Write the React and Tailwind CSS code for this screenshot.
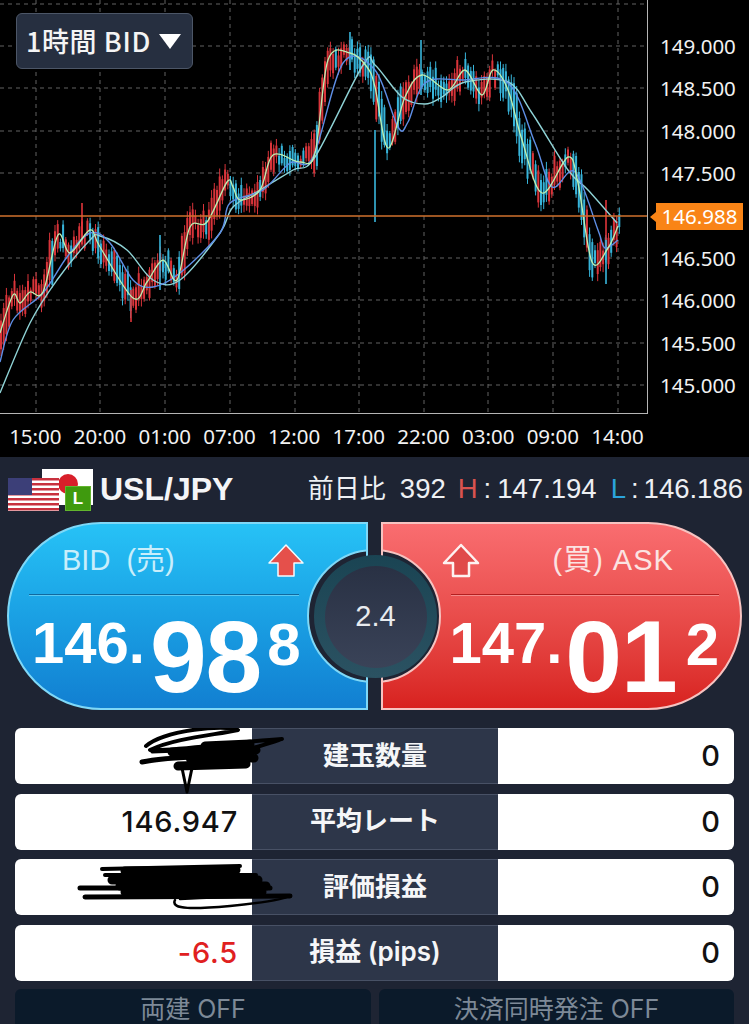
import React from 'react';

const fast = [[0,333],[13,295],[20,303],[30,292],[43,292],[58,235],[70,253],[90,230],[100,247],[133,298],[147,282],[163,260],[177,280],[190,227],[207,222],[227,182],[233,187],[240,200],[260,190],[273,155],[300,162],[315,153],[328,60],[350,53],[367,67],[375,87],[388,148],[405,97],[422,75],[448,90],[465,70],[482,95],[493,70],[508,90],[522,140],[542,193],[568,157],[578,183],[592,262],[608,248],[618,226]];
const mid = [[0,362],[13,320],[43,293],[67,257],[90,233],[110,243],[133,280],[153,287],[180,273],[220,233],[230,203],[263,190],[290,163],[313,157],[343,63],[375,70],[398,127],[408,122],[425,83],[462,80],[508,83],[535,143],[552,187],[575,172],[598,230],[605,248],[618,240]];
const slow = [[0,393],[30,323],[57,280],[90,240],[100,236],[127,250],[153,280],[180,280],[220,233],[233,207],[260,190],[293,170],[315,157],[363,65],[375,65],[402,97],[425,104],[442,97],[465,82],[508,82],[532,113],[568,170],[588,190],[617,223]];

// catmull-rom through the points so the averages read as curves
const toPath = (pts) => {
  let d = `M${pts[0][0]} ${pts[0][1]}`;
  for (let i = 0; i < pts.length - 1; i++) {
    const p0 = pts[i - 1] || pts[i];
    const p1 = pts[i];
    const p2 = pts[i + 1];
    const p3 = pts[i + 2] || p2;
    const c1x = p1[0] + (p2[0] - p0[0]) / 6;
    const c1y = p1[1] + (p2[1] - p0[1]) / 6;
    const c2x = p2[0] - (p3[0] - p1[0]) / 6;
    const c2y = p2[1] - (p3[1] - p1[1]) / 6;
    d += ` C${c1x} ${c1y} ${c2x} ${c2y} ${p2[0]} ${p2[1]}`;
  }
  return d;
};

const yAt = (x) => {
  for (let i = 1; i < fast.length; i++) {
    if (x <= fast[i][0]) {
      const [x0, y0] = fast[i - 1];
      const [x1, y1] = fast[i];
      return y0 + ((y1 - y0) * (x - x0)) / (x1 - x0);
    }
  }
  return fast[fast.length - 1][1];
};

// seeded so the candles come out the same each run
let seed = 17;
const rnd = () => {
  seed = (seed * 16807) % 2147483647;
  return seed / 2147483647;
};

const candles = [];
for (let x = 1; x < 620; x += 2.7) {
  const y = yAt(x);
  const slope = yAt(x + 6) - yAt(x - 6);
  const up = slope < -2 ? rnd() < 0.9 : slope > 2 ? rnd() < 0.2 : rnd() < 0.45;
  const size = 2 + rnd() * 8 + Math.min(Math.abs(slope) * 0.3, 14);
  const off = (rnd() - 0.5) * 14;
  candles.push({ x, top: y - size + off, bottom: y + size + off, wick: 2 + rnd() * 6, up });
}

const spikes = [
  [375, 130, 222, '#39b6dc'],
  [421, 40, 95, '#39b6dc'],
  [350, 32, 70, '#39b6dc'],
  [160, 235, 290, '#39b6dc'],
  [82, 203, 235, '#e0353a'],
  [131, 290, 322, '#e0353a'],
  [606, 200, 250, '#e0353a'],
  [606, 240, 284, '#39b6dc'],
];

const hLines = [4, 46, 88, 131, 173, 258, 300, 343, 385];
const vLines = [36, 100, 165, 230, 295, 359, 424, 488, 553, 618];
const prices = ['149.000', '148.500', '148.000', '147.500', '', '146.500', '146.000', '145.500', '145.000'];
const times = ['15:00', '20:00', '01:00', '07:00', '12:00', '17:00', '22:00', '03:00', '09:00', '14:00'];

const ChartSvg = () => (
  <svg width="648" height="414" viewBox="0 0 648 414" className="block">
    {hLines.map((y) => (
      <line key={y} x1="0" x2="647" y1={y} y2={y} stroke="#626262" strokeWidth="1" strokeDasharray="4 4" />
    ))}
    {vLines.map((x) => (
      <line key={x} x1={x} x2={x} y1="0" y2="413" stroke="#626262" strokeWidth="1" strokeDasharray="4 4" />
    ))}
    {candles.map((c, i) => (
      <g key={i} stroke={c.up ? '#d9343a' : '#37b4da'}>
        <line x1={c.x} x2={c.x} y1={c.top - c.wick} y2={c.bottom + c.wick} strokeWidth="1" />
        <line x1={c.x} x2={c.x} y1={c.top} y2={c.bottom} strokeWidth="2" />
      </g>
    ))}
    {spikes.map(([x, y1, y2, color], i) => (
      <line key={i} x1={x} x2={x} y1={y1} y2={y2} stroke={color} strokeWidth="1.6" />
    ))}
    <path d={toPath(slow)} fill="none" stroke="#8fd3d6" strokeWidth="1.4" />
    <path d={toPath(mid)} fill="none" stroke="#5f8fe6" strokeWidth="1.4" />
    <path d={toPath(fast)} fill="none" stroke="#bdf0b2" strokeWidth="1.3" />
    <line x1="0" x2="648" y1="216" y2="216" stroke="#d0722e" strokeWidth="1.6" />
    <line x1="0" x2="648" y1="413.5" y2="413.5" stroke="#b5b5b5" strokeWidth="1" />
    <line x1="647.5" x2="647.5" y1="0" y2="414" stroke="#b5b5b5" strokeWidth="1" />
  </svg>
);

const Flags = () => (
  <div className="relative w-[93px] h-[46px] shrink-0">
    <svg width="93" height="46" viewBox="0 0 93 46" className="block">
      <rect x="42" y="1" width="51" height="36" fill="#fff" />
      <circle cx="68" cy="16" r="10" fill="#d81f2a" />
      <rect x="8" y="10" width="51" height="33" fill="#fff" />
      {[0, 1, 2, 3, 4, 5, 6].map((i) => (
        <rect key={i} x="8" y={10 + i * 5} width="51" height="2.5" fill="#c8313e" />
      ))}
      <rect x="8" y="10" width="24" height="17" fill="#3c3f78" />
    </svg>
    <span className="absolute left-[65px] top-[18px] w-[26px] h-[25px] bg-[#3f9a0e] border border-[#62b52e] flex items-center justify-center text-white text-[17px] font-bold leading-none font-['Liberation_Sans',sans-serif]">
      L
    </span>
  </div>
);

const UpArrow = ({ fill, stroke, strokeWidth }) => (
  <svg width="38" height="36" viewBox="0 0 38 36">
    <path d="M19 2 L36 20 L27 20 L27 33 L11 33 L11 20 L2 20 Z" fill={fill} stroke={stroke} strokeWidth={strokeWidth} strokeLinejoin="round" />
  </svg>
);

const PriceText = ({ small, big, last, bigClass, lastClass }) => (
  <div className="flex items-start text-white font-bold font-['Liberation_Sans',sans-serif]">
    <span className="text-[58px] leading-[58px]">{small}</span>
    <span className={`text-[102px] leading-[90px] tracking-[-1px] -mt-[2px] ${bigClass}`}>{big}</span>
    <span className={`text-[60px] leading-[60px] mt-[1px] ${lastClass}`}>{last}</span>
  </div>
);

const rows = [
  { left: '', label: '建玉数量', right: '0' },
  { left: '146.947', label: '平均レート', right: '0' },
  { left: '', label: '評価損益', right: '0' },
  { left: '-6.5', label: '損益 (pips)', right: '0', red: true },
];

const Scribbles = () => (
  <svg width="719" height="253" viewBox="15 728 719 253" className="absolute left-0 top-0 pointer-events-none">
    <g fill="none" stroke="#000" strokeLinecap="round" strokeLinejoin="round">
      <path d="M146 746 C165 730 225 724 238 730 C215 735 175 738 150 750 C175 752 230 742 282 739 C262 747 240 748 252 756" strokeWidth="4" />
      <path d="M142 762 C175 755 225 758 255 752" strokeWidth="5" />
      <path d="M172 752 L256 750 M190 758 L254 758 M178 766 L246 764 M205 746 L250 744" strokeWidth="9" />
      <path d="M182 768 L187 792 L192 768 Z" strokeWidth="3" />
      <path d="M152 752 L205 750" strokeWidth="3" />
      <path d="M102 869 L240 866 M105 875 L256 875" strokeWidth="4" />
      <path d="M125 871 L236 870 M112 880 L258 880 M120 886 L266 886 M125 892 L262 892" strokeWidth="9" />
      <path d="M80 888 L270 888 M85 897 L290 896" strokeWidth="5" />
      <path d="M175 900 C170 910 195 909 230 906 C260 903 285 900 288 896 C270 896 220 897 180 899" strokeWidth="2.5" />
    </g>
  </svg>
);

const App = () => {
  return (
    <div className="w-[749px] h-[1024px] overflow-hidden bg-[#1e2433]">
      {/* Chart */}
      <div className="relative h-[457px] bg-black flex font-['Noto_Sans','Noto_Sans_CJK_JP',sans-serif] text-[#f2f2f2]">
        <div className="w-[648px] shrink-0">
          <ChartSvg />
          <div className="flex pl-[3px] mt-[8px] text-[20.5px] leading-[28px]">
            {times.map((t) => (
              <span key={t} className="w-[64.7px] shrink-0 text-center">{t}</span>
            ))}
          </div>
        </div>
        <div className="flex flex-col pt-[25px] pl-[12px] text-[20.5px]">
          {prices.map((p, i) => (
            <span key={i} className="h-[42.4px] leading-[42.4px]">{p}</span>
          ))}
        </div>

        <button className="absolute left-[16px] top-[13px] w-[177px] h-[56px] rounded-[6px] bg-[#262f40] border border-[#4c5667] flex items-center pl-[9px] text-[27px] font-medium tracking-[0.6px] text-[#f4f4f4] font-['Noto_Sans_CJK_JP',sans-serif] whitespace-nowrap">
          <span>1時間 BID</span>
          <svg width="22" height="15" viewBox="0 0 22 15" className="ml-[8px] shrink-0">
            <path d="M0 0 H22 L11 15 Z" fill="#fff" />
          </svg>
        </button>

        <div className="absolute left-[650px] top-[203px] h-[27px] flex items-center">
          <span className="w-0 h-0 border-y-[5px] border-y-transparent border-r-[6px] border-r-[#f98416]" />
          <span className="w-[87px] h-[27px] bg-[#f98416] text-white text-[20.5px] leading-[27px] text-center">146.988</span>
        </div>
      </div>

      {/* Pair header */}
      <div className="h-[65px] flex items-start text-[#eef0f3] font-['Liberation_Sans','Noto_Sans_CJK_JP',sans-serif]">
        <div className="mt-[11px]"><Flags /></div>
        <span className="ml-[7px] mt-[14px] text-[32px] leading-[36px] font-bold text-[#f4f5f7]">USL/JPY</span>
        <div className="ml-auto mr-[6px] mt-[14px] flex items-center text-[27.5px] leading-[36px] whitespace-nowrap">
          <span className="text-[26px]">前日比</span>
          <span className="ml-[14px]">392</span>
          <span className="ml-[12px] text-[#d9534f]">H</span>
          <span className="px-[6px]">:</span>
          <span>147.194</span>
          <span className="ml-[14px] text-[#2ba3dc]">L</span>
          <span className="px-[5px]">:</span>
          <span>146.186</span>
        </div>
      </div>

      {/* Bid / Ask */}
      <div className="relative h-[188px] px-[7px] flex gap-[13px] font-['Liberation_Sans','Noto_Sans_CJK_JP',sans-serif]">
        <div className="relative w-[362px] rounded-l-[94px] border-2 border-[#7fd8f7] bg-gradient-to-b from-[#27c2f6] to-[#127fd1] pl-[23px]">
          <div className="absolute inset-0 overflow-hidden">
            <span className="absolute -right-[75px] top-[25px] w-[134px] h-[134px] rounded-full border-2 border-[#7fd8f7] bg-[#1e2433]" />
          </div>
          <div className="relative h-[70px] flex items-center justify-between pl-[30px] pr-[61px] pt-[4px] text-[#c9eefb] text-[29px]">
            <span>BID&nbsp; (売)</span>
            <UpArrow fill="#e5504b" stroke="#f2fbff" strokeWidth="1.5" />
          </div>
          <div className="relative w-[270px] h-[2px] -ml-[3px] border-t border-[#11699f] bg-[#5cc9f2]" />
          <div className="relative mt-[18px]">
            <PriceText small="146." big="98" last="8" bigClass="ml-[5px]" lastClass="ml-[6px]" />
          </div>
        </div>

        <div className="relative w-[361px] rounded-r-[94px] border-2 border-[#f6c3c1] bg-gradient-to-b from-[#f96d70] to-[#d8211f] pl-[66px]">
          <div className="absolute inset-0 overflow-hidden">
            <span className="absolute -left-[76px] top-[25px] w-[134px] h-[134px] rounded-full border-2 border-[#f6c3c1] bg-[#1e2433]" />
          </div>
          <div className="relative h-[70px] flex items-center -ml-[7px] pt-[4px] text-[#fbe3e2] text-[29px]">
            <UpArrow fill="#e04a4a" stroke="#fdf2f1" strokeWidth="2.5" />
            <span className="ml-[72px] tracking-[1px]">(買) ASK</span>
          </div>
          <div className="relative w-[268px] h-[2px] ml-[2px] border-t border-[#b31f1f] bg-[#f58a8a]" />
          <div className="relative mt-[18px]">
            <PriceText small="147." big="01" last="2" bigClass="ml-[3px]" lastClass="ml-[9px]" />
          </div>
        </div>

        {/* Spread */}
        <div className="absolute left-[314px] top-[33px] w-[123px] h-[123px] rounded-full bg-gradient-to-b from-[#1a4453] to-[#2b5262] flex items-center justify-center">
          <div className="w-[102px] h-[102px] rounded-full bg-gradient-to-b from-[#293144] to-[#3a4358] flex items-center justify-center text-[#e8ebef] text-[29px]">
            2.4
          </div>
        </div>
      </div>

      {/* Position rows */}
      <div className="relative mt-[18px] mx-[15px] flex flex-col gap-[9.5px]">
        {rows.map((r) => (
          <div key={r.label} className="h-[56px] flex rounded-[6px] overflow-hidden bg-white font-['Inter','Noto_Sans_CJK_JP',sans-serif]">
            <div className={`w-[237px] flex items-center justify-end pr-[14px] text-[29px] tracking-[0.8px] font-medium ${r.red ? 'text-[#e0201f]' : 'text-[#111]'}`}>
              {r.left}
            </div>
            <div className="w-[246px] flex items-center justify-center pb-[2px] bg-[#2d3649] border-y border-[#485165] text-[#f5f6f8] text-[26px] font-semibold">
              {r.label}
            </div>
            <div className="w-[236px] flex items-center justify-end pr-[14px] text-[29px] font-medium text-[#111]">
              {r.right}
            </div>
          </div>
        ))}
        <Scribbles />
      </div>

      {/* Toggles */}
      <div className="mt-[8.5px] mx-[15px] flex gap-[8px] font-['Inter','Noto_Sans_CJK_JP',sans-serif] text-[25px] text-[#7d8997]">
        <div className="w-[356px] h-[50px] pt-[2px] rounded-t-[6px] bg-[#0b1a2a] text-center leading-[36px]">両建 OFF</div>
        <div className="w-[355px] h-[50px] pt-[2px] rounded-t-[6px] bg-[#0b1a2a] text-center leading-[36px]">決済同時発注 OFF</div>
      </div>
    </div>
  );
};

export default App;
